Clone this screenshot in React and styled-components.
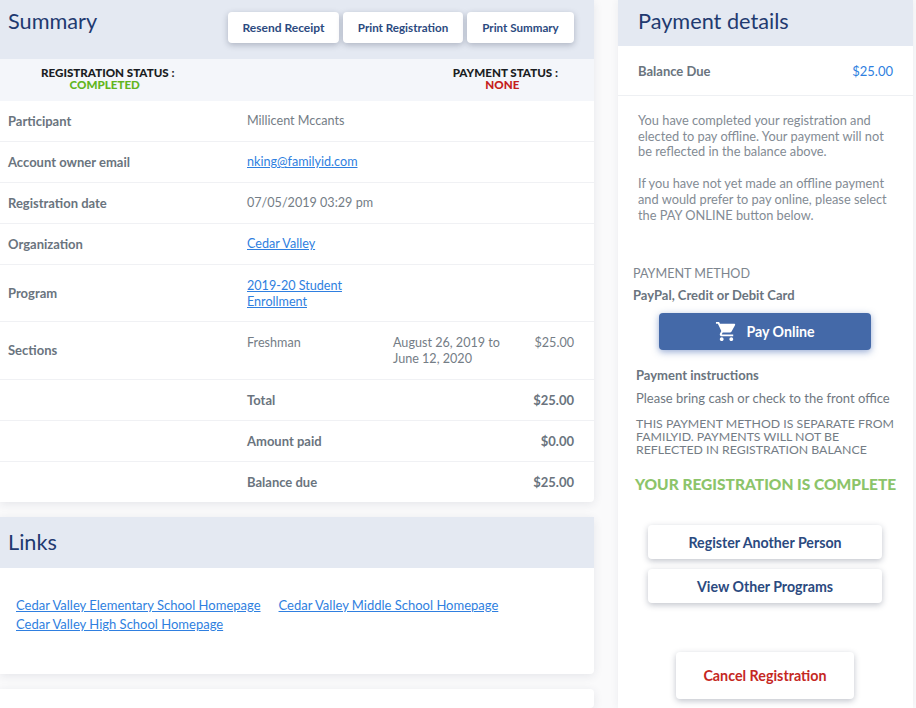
import React from 'react';
import styled, { createGlobalStyle } from 'styled-components';
import { MdShoppingCart } from 'react-icons/md';

const GlobalStyle = createGlobalStyle`
  html, body {
    margin: 0;
    padding: 0;
    height: 708px;
    overflow: hidden;
    background: #fafafb;
    font-family: Lato, "Liberation Sans", sans-serif;
    color: #6c7680;
  }
  a { color: #2f7fe0; }
`;

const Page = styled.div`
  display: flex;
  gap: 24px;
  width: 916px;
  height: 708px;
  overflow: hidden;
`;

const LeftColumn = styled.div`
  display: flex;
  flex-direction: column;
  gap: 15px;
  width: 594px;
  flex: none;
`;

const Card = styled.section`
  background: #fff;
  border-radius: 0 4px 4px 0;
  box-shadow: 0 2px 10px rgba(40, 50, 80, 0.1);
`;

const CardHeader = styled.header`
  display: flex;
  justify-content: space-between;
  align-items: flex-start;
  height: ${props => props.height}px;
  padding: ${props => props.pt}px ${props => props.pr || 0}px 0 ${props => props.pl}px;
  box-sizing: border-box;
  background: #e4e9f2;
`;

const Title = styled.h2`
  margin: 0;
  font-size: 21.7px;
  line-height: 28px;
  font-weight: 400;
  color: #1f3a70;
`;

const ButtonRow = styled.div`
  display: flex;
  gap: 4px;
  margin-top: 5px;
`;

const WhiteButton = styled.button`
  display: block;
  width: ${props => props.w}px;
  height: ${props => props.h}px;
  margin: ${props => props.m || '0'};
  padding: 0;
  border: 0;
  border-radius: 4px;
  background: #fff;
  box-shadow: 0 2px 6px rgba(30, 40, 70, 0.28);
  font-family: inherit;
  font-size: ${props => props.fs}px;
  font-weight: 700;
  color: ${props => props.danger ? '#c5281f' : '#2b4a80'};
`;

const StatusStrip = styled.div`
  display: flex;
  justify-content: space-between;
  height: 42px;
  padding: 8px 36px 0 41px;
  box-sizing: border-box;
  background: #f4f6fa;
`;

const Status = styled.div`
  font-size: 11.6px;
  line-height: 12px;
  font-weight: 900;
  color: #1a1d22;
  text-align: center;
`;

const StatusValue = styled.div`
  color: ${props => props.color};
  padding-right: 6px;
`;

const Row = styled.div`
  display: grid;
  grid-template-columns: 239px 146px 1fr auto;
  align-items: ${props => props.top ? 'start' : 'center'};
  height: ${props => props.height || 41}px;
  padding: 0 20px 0 8px;
  box-sizing: border-box;
  border-top: ${props => props.first ? 0 : '1px solid #f0f1f4'};
  font-size: 12.6px;
  line-height: 16px;
`;

const Label = styled.div`
  font-size: 13px;
  font-weight: 700;
  color: #6a747e;
  ${props => props.pt && `padding-top: ${props.pt}px;`}
`;

const Value = styled.div`
  color: #747d86;
  ${props => props.pt && `padding-top: ${props.pt}px;`}
  ${props => props.bold && 'font-size: 13px; font-weight: 700; color: #6a747e;'}
  ${props => props.narrow && `max-width: ${props.narrow}px;`}
`;

const Amount = styled(Value)`
  grid-column: 4;
  text-align: right;
`;

const LinkList = styled.div`
  display: flex;
  flex-wrap: wrap;
  align-content: flex-start;
  column-gap: 18px;
  height: 106px;
  padding: 28px 16px 0;
  box-sizing: border-box;
  font-size: 13px;
  line-height: 19px;
`;

const LineBreak = styled.div`
  flex-basis: 100%;
`;

const EmptyCard = styled(Card)`
  height: 40px;
`;

const RightColumn = styled.aside`
  width: 295px;
  flex: none;
  background: #fff;
  height: 708px;
  box-shadow: 0 0 8px rgba(40, 50, 80, 0.07);
`;

const BalanceRow = styled.div`
  display: flex;
  justify-content: space-between;
  height: 50px;
  padding: 17px 20px 0 20px;
  box-sizing: border-box;
  border-bottom: 1px solid #eef0f3;
  font-size: 13px;
  line-height: 16px;
`;

const BalanceValue = styled.span`
  color: #2f7fe0;
`;

const Notice = styled.p`
  margin: 0 16px ${props => props.mb}px 20px;
  font-size: 12.8px;
  line-height: 15.7px;
  color: #838b94;
`;

const NoticeBlock = styled.div`
  padding-top: 17px;
`;

const MethodBlock = styled.div`
  padding-left: 15px;
  margin-top: 43px;
`;

const MethodLabel = styled.div`
  font-size: 12.6px;
  line-height: 16px;
  color: #7d858e;
`;

const MethodName = styled.div`
  margin-top: 5px;
  font-size: 13px;
  line-height: 16px;
  font-weight: 700;
  color: #6a747e;
`;

const PayButton = styled.button`
  display: flex;
  align-items: center;
  justify-content: center;
  gap: 8px;
  width: 212px;
  height: 37px;
  margin: 10px 0 0 26px;
  padding: 0;
  border: 0;
  border-radius: 4px;
  background: #4469a8;
  box-shadow: 0 2px 7px rgba(50, 90, 170, 0.5);
  font-family: inherit;
  font-size: 14.2px;
  font-weight: 700;
  color: #fff;
`;

const Instructions = styled.div`
  padding: 17px 14px 0 18px;
  font-size: 13px;
  line-height: 16px;
`;

const InstructionsTitle = styled.div`
  font-weight: 700;
  color: #6a747e;
`;

const InstructionsText = styled.div`
  margin-top: 7px;
  color: #6f7881;
`;

const Warning = styled.div`
  margin-top: 11px;
  font-size: 12.3px;
  line-height: 13px;
  color: #747d86;
`;

const CompleteText = styled.div`
  margin: 18px 0 0 17px;
  font-size: 15.5px;
  line-height: 20px;
  font-weight: 900;
  white-space: nowrap;
  color: #8cc46a;
`;

const App = () => {
  const rows = [
    { label: 'Participant', value: 'Millicent Mccants' },
    { label: 'Account owner email', value: <a href="#email">nking@familyid.com</a> },
    { label: 'Registration date', value: '07/05/2019 03:29 pm' },
    { label: 'Organization', value: <a href="#org">Cedar Valley</a> },
  ];
  const totals = [
    { label: 'Total', value: '$25.00' },
    { label: 'Amount paid', value: '$0.00' },
    { label: 'Balance due', value: '$25.00' },
  ];

  return (
    <>
      <GlobalStyle />
      <Page>
        <LeftColumn>
          <Card>
            <CardHeader height={59} pt={7} pr={20} pl={8}>
              <Title>Summary</Title>
              <ButtonRow>
                <WhiteButton w={111} h={31} fs={12}>Resend Receipt</WhiteButton>
                <WhiteButton w={120} h={31} fs={11.6}>Print Registration</WhiteButton>
                <WhiteButton w={107} h={31} fs={11.6}>Print Summary</WhiteButton>
              </ButtonRow>
            </CardHeader>
            <StatusStrip>
              <Status>
                REGISTRATION STATUS :
                <StatusValue color="#62b51e">COMPLETED</StatusValue>
              </Status>
              <Status>
                PAYMENT STATUS :
                <StatusValue color="#c5201a">NONE</StatusValue>
              </Status>
            </StatusStrip>
            {rows.map((row, i) => (
              <Row key={row.label} first={i === 0} height={i === 0 ? 40 : 41}>
                <Label>{row.label}</Label>
                <Value>{row.value}</Value>
              </Row>
            ))}
            <Row height={57}>
              <Label>Program</Label>
              <Value pt={2}><a href="#program">2019-20 Student Enrollment</a></Value>
            </Row>
            <Row height={58} top>
              <Label pt={20}>Sections</Label>
              <Value pt={13}>Freshman</Value>
              <Value pt={13} narrow={120}>August 26, 2019 to June 12, 2020</Value>
              <Amount pt={13}>$25.00</Amount>
            </Row>
            {totals.map(row => (
              <Row key={row.label}>
                <div />
                <Value bold>{row.label}</Value>
                <Amount bold>{row.value}</Amount>
              </Row>
            ))}
          </Card>
          <Card>
            <CardHeader height={51} pt={11} pl={8}>
              <Title>Links</Title>
            </CardHeader>
            <LinkList>
              <a href="#elementary">Cedar Valley Elementary School Homepage</a>
              <a href="#middle">Cedar Valley Middle School Homepage</a>
              <LineBreak />
              <a href="#high">Cedar Valley High School Homepage</a>
            </LinkList>
          </Card>
          <EmptyCard />
        </LeftColumn>
        <RightColumn>
          <CardHeader height={46} pt={7} pl={20}>
            <Title>Payment details</Title>
          </CardHeader>
          <BalanceRow>
            <Label>Balance Due</Label>
            <BalanceValue>$25.00</BalanceValue>
          </BalanceRow>
          <NoticeBlock>
            <Notice mb={16}>
              You have completed your registration and elected to pay offline. Your payment will not be reflected in the balance above.
            </Notice>
            <Notice mb={0}>
              If you have not yet made an offline payment and would prefer to pay online, please select the PAY ONLINE button below.
            </Notice>
          </NoticeBlock>
          <MethodBlock>
            <MethodLabel>PAYMENT METHOD</MethodLabel>
            <MethodName>PayPal, Credit or Debit Card</MethodName>
            <PayButton><MdShoppingCart size={23} />Pay Online</PayButton>
          </MethodBlock>
          <Instructions>
            <InstructionsTitle>Payment instructions</InstructionsTitle>
            <InstructionsText>Please bring cash or check to the front office</InstructionsText>
            <Warning>THIS PAYMENT METHOD IS SEPARATE FROM FAMILYID. PAYMENTS WILL NOT BE REFLECTED IN REGISTRATION BALANCE</Warning>
          </Instructions>
          <CompleteText>YOUR REGISTRATION IS COMPLETE</CompleteText>
          <WhiteButton w={234} h={34} fs={14.2} m="31px 0 0 30px">Register Another Person</WhiteButton>
          <WhiteButton w={234} h={34} fs={14.2} m="10px 0 0 30px">View Other Programs</WhiteButton>
          <WhiteButton w={178} h={47} fs={14.3} m="49px 0 0 58px" danger>Cancel Registration</WhiteButton>
        </RightColumn>
      </Page>
    </>
  );
};

export default App;
